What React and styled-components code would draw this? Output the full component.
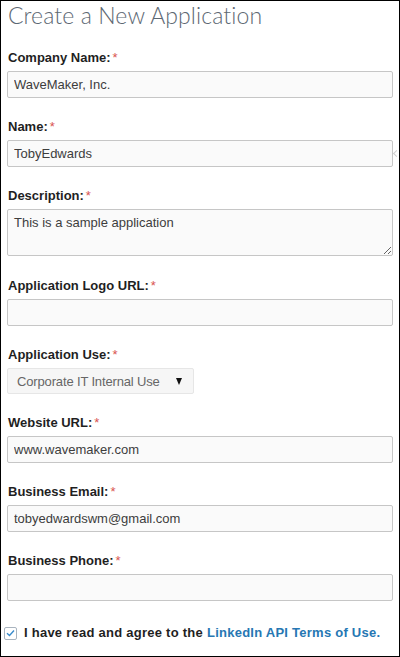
import React from "react";
import styled, { createGlobalStyle } from "styled-components";

const Global = createGlobalStyle`
  html, body { margin: 0; padding: 0; background: #fff; }
  * { box-sizing: border-box; }
`;

const Frame = styled.div`
  width: 400px;
  height: 657px;
  border: 1px solid #000;
  padding: 0 7px 0 6px;
  background: #fff;
  font-family: "Liberation Sans", Arial, sans-serif;
  display: flex;
  flex-direction: column;
  overflow: hidden;
`;

const Title = styled.h1`
  margin: 0 0 21px 1px;
  font-family: Lato, "Open Sans", sans-serif;
  font-weight: 300;
  font-size: 23px;
  line-height: 28px;
  color: #5d6873;
  letter-spacing: 0.1px;
`;

const Field = styled.div`
  position: relative;
  display: flex;
  flex-direction: column;
  margin-bottom: ${(p) => p.$gap ?? 21}px;
`;

const Label = styled.label`
  display: block;
  margin: 0 0 5px 1px;
  font-size: 13px;
  line-height: 16px;
  font-weight: bold;
  color: #1f1f1f;
`;

const Req = styled.span`
  color: #d9534f;
  font-weight: normal;
  margin-left: 2px;
`;

const inputBase = `
  width: 386px;
  border: 1px solid #c6c6c6;
  border-radius: 2px;
  background: #fafafa;
  font-family: "Liberation Sans", Arial, sans-serif;
  font-size: 13px;
  color: #3d3d3d;
  padding: 0 6px;
  outline: none;
  margin: 0;
`;

const TextInput = styled.input`
  ${inputBase}
  height: 27px;
  display: block;
`;

const TextArea = styled.textarea`
  ${inputBase}
  height: 47px;
  display: block;
  padding: 5px 6px;
  line-height: 16px;
  resize: vertical;
`;

const SelectBox = styled.div`
  position: relative;
  width: 187px;
  height: 26px;
  border: 1px solid #e6e6e6;
  border-radius: 2px;
  background: #f6f6f6;
  display: flex;
  align-items: center;
  padding: 0 9px 0 9px;
  font-size: 13px;
  letter-spacing: -0.15px;
  color: #666;
`;

const SelectText = styled.span`
  flex: 1;
`;

const Caret = styled.span`
  width: 0;
  height: 0;
  border-left: 3.5px solid transparent;
  border-right: 3.5px solid transparent;
  border-top: 7px solid #111;
  margin-right: 2px;
`;

const Tip = styled.span`
  position: absolute;
  right: -7px;
  top: 32px;
  width: 5px;
  height: 5px;
  border-left: 1px solid #cfcfcf;
  border-bottom: 1px solid #cfcfcf;
  transform: rotate(45deg);
`;

const AgreeRow = styled.div`
  display: flex;
  align-items: center;
  margin: 3px 0 0 -3px;
  font-size: 13px;
  line-height: 16px;
  font-weight: bold;
  letter-spacing: 0.25px;
  color: #1f1f1f;
`;

const Check = styled.span`
  width: 13px;
  height: 13px;
  border: 1px solid #a9b4bf;
  border-radius: 2px;
  background: #fff;
  display: inline-flex;
  align-items: center;
  justify-content: center;
  margin-right: 7px;
`;

const Link = styled.a`
  color: #2677b3;
  text-decoration: none;
  margin-left: 4px;
`;

const fields = [
  { label: "Company Name:", value: "WaveMaker, Inc." },
  { label: "Name:", value: "TobyEdwards", tip: true },
];

export default function App() {
  return (
    <>
      <Global />
      <Frame>
        <Title>Create a New Application</Title>
        {fields.map((f) => (
          <Field key={f.label}>
            <Label>
              {f.label}
              <Req>*</Req>
            </Label>
            <TextInput defaultValue={f.value} />
            {f.tip && <Tip />}
          </Field>
        ))}
        <Field $gap={22}>
          <Label>
            Description:<Req>*</Req>
          </Label>
          <TextArea defaultValue="This is a sample application" />
        </Field>
        <Field>
          <Label>
            Application Logo URL:<Req>*</Req>
          </Label>
          <TextInput defaultValue="" />
        </Field>
        <Field>
          <Label>
            Application Use:<Req>*</Req>
          </Label>
          <SelectBox>
            <SelectText>Corporate IT Internal Use</SelectText>
            <Caret />
          </SelectBox>
        </Field>
        <Field>
          <Label>
            Website URL:<Req>*</Req>
          </Label>
          <TextInput defaultValue="www.wavemaker.com" />
        </Field>
        <Field>
          <Label>
            Business Email:<Req>*</Req>
          </Label>
          <TextInput defaultValue="tobyedwardswm@gmail.com" />
        </Field>
        <Field>
          <Label>
            Business Phone:<Req>*</Req>
          </Label>
          <TextInput defaultValue="" />
        </Field>
        <AgreeRow>
          <Check>
            <svg width="9" height="8" viewBox="0 0 9 8">
              <path d="M1 4.2 L3.5 6.5 L8 1.5" fill="none" stroke="#3a8ccc" strokeWidth="1.4" />
            </svg>
          </Check>
          I have read and agree to the
          <Link href="#">LinkedIn API Terms of Use.</Link>
        </AgreeRow>
      </Frame>
    </>
  );
}
